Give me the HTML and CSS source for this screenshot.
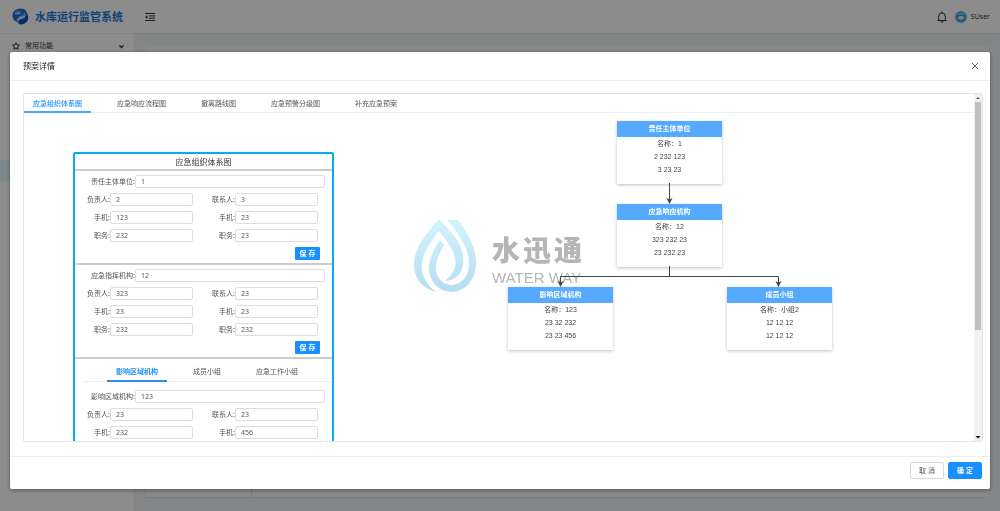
FILE: index.html
```html
<!DOCTYPE html>
<html lang="zh-CN">
<head>
<meta charset="utf-8">
<title>水库运行监管系统</title>
<link rel="stylesheet" href="styles.css">
</head>
<body>
<div class="app">
  <aside class="sidebar">
    <div class="brand">
      <svg class="brand-mark" viewBox="0 0 17 17"><path d="M.5 7.500C.5 3.500 4 .5 8.500.5c5 0 7 3 5 6-1 1.600-3 2-4.500 2.500C6 10 5 11.500 6 14.500 3 13.500.5 11 .5 7.500Z" fill="#176fe0"/><path d="M16.200 8.500c.8 4.500-3 8-7.700 8-3 0-3-3.500-1-5 2-1.200 4-1 5.500-3 1-1.300 1.200-3 .5-5 1.500 1 2.500 3 2.700 5Z" fill="#0e55c4"/><path d="M3 5.500h5M4 3.500v3M6 2.500v4M8 3v3M13 5c-1.500 4-6.500 2.500-8 7.500M7 11.500c2-1.500 4-1 6-2.500" stroke="#c8dcf2" fill="none" stroke-width="1"/></svg>
      <span class="brand-name">水库运行监管系统</span>
    </div>
    <nav class="side-menu">
      <a class="side-item" href="#">
        <svg class="icon" viewBox="0 0 16 16"><path d="m8 1.500 2 4.300 4.700.6-3.500 3.200.9 4.700L8 12l-4.100 2.300.9-4.700L1.300 6.400 6 5.800Z"/></svg>
        <span class="side-label">常用功能</span>
        <svg class="chevron" viewBox="0 0 10 10"><path d="m2 3.500 3 3 3-3"/></svg>
      </a>
      <a class="side-item side-item-active" href="#" aria-label="预案"></a>
    </nav>
  </aside>
  <div class="main">
    <header class="topbar">
      <svg class="fold" viewBox="0 0 10 10"><path d="M0 1.500h10M4 3.900h6M4 6.200h6M0 8.500h10"/><path class="fold-tip" d="M2.500 3v4L0 5Z"/></svg>
      <div class="user">
        <svg class="bell" viewBox="0 0 10 12"><path d="M.5 9.500h9M1.700 9.500V5.200a3.300 3.300 0 0 1 6.600 0v4.300M5 2V.5M3.800 10.200c.2 1.500 2.200 1.500 2.400 0"/></svg>
        <svg class="avatar" viewBox="0 0 12 12"><circle cx="6" cy="6" r="6" fill="#5eb4e8"/><circle cx="6" cy="6.200" r="4" fill="#2589c8"/><ellipse cx="6" cy="6.800" rx="3" ry="2" fill="#d8eaf5"/><path d="M3 4q3-3 6 0" stroke="#bcdcf0" fill="none"/></svg>
        <span>SUser</span>
      </div>
    </header>
    <div class="page"><div class="page-card"><div class="page-left"></div></div></div>
  </div>
</div>
<div class="mask">
<section class="modal" role="dialog" aria-labelledby="dialog-title">
  <header class="modal-head">
    <h1 class="modal-title" id="dialog-title">预案详情</h1>
    <button class="close" aria-label="关闭"><svg viewBox="0 0 8 8"><path d="m1 1 6 6M7 1 1 7"/></svg></button>
  </header>
  <div class="modal-body">
    <div class="viewer">
      <div class="content">
        <div class="tabs" role="tablist">
          <button class="tab tab-on" role="tab">应急组织体系图</button>
          <button class="tab" role="tab">应急响应流程图</button>
          <button class="tab" role="tab">撤离路线图</button>
          <button class="tab" role="tab">应急预警分级图</button>
          <button class="tab" role="tab">补充应急预案</button>
        </div>
        <div class="split">
          <form class="plan">
            <h2 class="plan-title">应急组织体系图</h2>
            <div class="group">
              <div class="field field-wide"><label for="a0">责任主体单位:</label><input id="a0" value="1"></div>
              <div class="pairs">
                <div class="field"><label for="a1">负责人:</label><input id="a1" value="2"></div>
                <div class="field"><label for="a2">联系人:</label><input id="a2" value="3"></div>
                <div class="field"><label for="a3">手机:</label><input id="a3" value="123"></div>
                <div class="field"><label for="a4">手机:</label><input id="a4" value="23"></div>
                <div class="field"><label for="a5">职务:</label><input id="a5" value="232"></div>
                <div class="field"><label for="a6">职务:</label><input id="a6" value="23"></div>
              </div>
              <button class="save" type="button">保 存</button>
            </div>
            <div class="group">
              <div class="field field-wide"><label for="b0">应急指挥机构:</label><input id="b0" value="12"></div>
              <div class="pairs">
                <div class="field"><label for="b1">负责人:</label><input id="b1" value="323"></div>
                <div class="field"><label for="b2">联系人:</label><input id="b2" value="23"></div>
                <div class="field"><label for="b3">手机:</label><input id="b3" value="23"></div>
                <div class="field"><label for="b4">手机:</label><input id="b4" value="23"></div>
                <div class="field"><label for="b5">职务:</label><input id="b5" value="232"></div>
                <div class="field"><label for="b6">职务:</label><input id="b6" value="232"></div>
              </div>
              <button class="save" type="button">保 存</button>
            </div>
            <div class="subtabs" role="tablist">
              <button class="subtab subtab-on" type="button" role="tab">影响区域机构</button>
              <button class="subtab" type="button" role="tab">成员小组</button>
              <button class="subtab" type="button" role="tab">应急工作小组</button>
            </div>
            <div class="group group-last">
              <div class="field field-wide"><label for="c0">影响区域机构:</label><input id="c0" value="123"></div>
              <div class="pairs">
                <div class="field"><label for="c1">负责人:</label><input id="c1" value="23"></div>
                <div class="field"><label for="c2">联系人:</label><input id="c2" value="23"></div>
                <div class="field"><label for="c3">手机:</label><input id="c3" value="232"></div>
                <div class="field"><label for="c4">手机:</label><input id="c4" value="456"></div>
              </div>
            </div>
          </form>
          <div class="chart">
            <svg class="links" viewBox="0 0 324 230"><path d="M161.500 62v20M161.500 145v10.500M52.500 165v-9.500h218v9.500"/><path class="tip" d="m158.500 77 3 6 3-6-3 1.500ZM49.500 160l3 6 3-6-3 1.500ZM267.500 160l3 6 3-6-3 1.500Z"/></svg>
            <div class="node node-root"><h3>责任主体单位</h3><p>名称：1</p><p>2 232 123</p><p>3 23 23</p></div>
            <div class="node node-mid"><h3>应急响应机构</h3><p>名称：12</p><p>323 232 23</p><p>23 232 23</p></div>
            <div class="node node-left"><h3>影响区域机构</h3><p>名称：123</p><p>23 32 232</p><p>23 23 456</p></div>
            <div class="node node-right"><h3>成员小组</h3><p>名称：小组2</p><p>12 12 12</p><p>12 12 12</p></div>
          </div>
        </div>
      </div>
      <div class="scrollbar" aria-hidden="true">
        <svg viewBox="0 0 8 8"><path d="m2 5 2-2 2 2Z"/></svg>
        <div class="track"><div class="thumb"></div></div>
        <svg class="down" viewBox="0 0 8 8"><path d="m1.500 3 2.500 2.500L6.500 3Z"/></svg>
      </div>
      <div class="watermark">
        <svg class="drop" viewBox="0 0 62 74"><defs><linearGradient id="g" x1="0" y1="0" x2="0" y2="1"><stop offset="0" stop-color="#d2f3fd"/><stop offset="1" stop-color="#b5def1"/></linearGradient></defs><path fill="url(#g)" d="M25 0C14 13 0 27 0 46 0 59 9 70 22 73 12 65 6 55 8 43 10 32 18 21 25 12 32 21 39 29 41 39 43 48 39 55 31 62 42 61 48 55 49 45 51 33 45 23 37 13Z"/><path fill="url(#g)" d="M33 1h11C54 14 62 29 62 44 62 61 51 73 37 73 24 72 15 62 15 49 16 38 20 29 26 21l4 5C26 34 21 42 22 51 23 60 30 66 38 66 48 65 55 57 55 45 55 29 45 15 33 1Z"/></svg>
        <div class="wm-text">
          <div class="wm-cn"><span>水</span><span>迅</span><span>通</span></div>
          <div class="wm-en">WATER WAY</div>
        </div>
      </div>
    </div>
  </div>
  <footer class="modal-foot">
    <button class="btn">取 消</button>
    <button class="btn btn-primary">确 定</button>
  </footer>
</section>
</div>
</body>
</html>
```
FILE: styles.css
```css
* { box-sizing: border-box; }
body {
  margin: 0;
  font: 7px/10px "Noto Sans", "Noto Sans CJK SC", sans-serif;
  color: #555;
}
h1, h2, h3, p { margin: 0; font-weight: 400; }
button, input { font: inherit; color: inherit; margin: 0; padding: 0; border: 0; background: none; }
svg { display: block; fill: none; stroke: currentColor; flex: none; }
a { color: inherit; text-decoration: none; }

/* Application behind the dialog */
.app { display: flex; height: 100vh; overflow: hidden; background: #f0f2f5; }
.sidebar { width: 134px; background: #fff; }
.brand { display: flex; align-items: center; gap: 6px; height: 34px; padding-left: 12px; border-bottom: 1px solid #eee; }
.brand-mark { width: 17px; height: 17px; stroke: none; }
.brand-name { font-size: 11px; font-weight: 700; color: #1a79dc; white-space: nowrap; }
.side-item { display: flex; align-items: center; height: 24px; padding: 0 9px 0 12px; color: #333; }
.side-item-active { height: 21px; margin-top: 102px; background: #e6f7ff; }
.icon { width: 8px; height: 8px; stroke-width: 2; margin-right: 5px; }
.side-label { flex: 1; }
.chevron { width: 7px; height: 7px; stroke-width: 2; }
.main { flex: 1; display: flex; flex-direction: column; }
.topbar { display: flex; align-items: center; justify-content: space-between; height: 34px; padding: 0 10px 0 11px; background: #fff; border-bottom: 1px solid #e4e6ea; color: #333; }
.fold { width: 10px; height: 10px; }
.fold-tip { fill: currentColor; stroke: none; }
.user { display: flex; align-items: center; gap: 8px; }
.bell { width: 10px; height: 12px; }
.avatar { width: 12px; height: 12px; stroke: none; }
.user span { margin-left: -4px; }
.page { flex: 1; padding: 12px 12px 13px; }
.page-card { display: flex; align-items: flex-end; height: 100%; background: #f8f9fa; border-bottom: 1px solid #dcdee2; border-radius: 1px; }
.page-left { width: 106px; height: 40px; border-right: 1px solid #dcdee2; }

/* Dialog */
.mask { position: fixed; inset: 0; padding: 52px 10px 22px; background: rgba(0, 0, 0, .45); }
.modal { display: flex; flex-direction: column; height: 100%; background: #fff; border-radius: 2px; box-shadow: 0 1px 4px rgba(0, 0, 0, .4); }
.modal-head { display: flex; align-items: center; justify-content: space-between; height: 29px; padding: 0 11px 0 13px; border-bottom: 1px solid #eee; }
.modal-title { font-size: 8px; color: #222; }
.close { width: 8px; height: 8px; color: #666; }
.modal-body { flex: 1; min-height: 0; padding: 12px 7px 14px 13px; }
.viewer { position: relative; display: flex; height: 100%; border: 1px solid #e4e4e4; border-radius: 2px; overflow: hidden; }
.content { flex: 1; overflow: hidden; }
.modal-foot { display: flex; justify-content: flex-end; gap: 4px; padding: 5px 8px 10px; border-top: 1px solid #eee; }
.btn { width: 34px; height: 17px; border: 1px solid #d9d9d9; border-radius: 2px; }
.btn-primary { border-color: #1890ff; background: #1890ff; color: #fff; font-weight: 700; }

.tabs { display: flex; gap: 17px; height: 19px; border-bottom: 1px solid #eee; }
.tab { height: 19px; padding: 2px 9px 0; border-bottom: 2px solid transparent; }
.tab-on { color: #1890ff; border-color: #4aa6f8; font-weight: 500; }
.split { display: grid; grid-template-columns: 484px 1fr; }

/* Plan form */
.plan { width: 261px; margin: 39px 0 0 49px; border: 2px solid #08aaf2; border-radius: 2px; }
.plan-title { height: 17px; border-bottom: 2px solid #ccc; font-size: 8px; line-height: 15px; text-align: center; color: #333; }
.group { display: flex; flex-direction: column; gap: 5px; padding: 4px 7px 3px; border-bottom: 2px solid #ccc; }
.group-last { padding-top: 8px; border: 0; }
.field { display: grid; grid-template-columns: 28px 83px; align-items: center; }
.field-wide { grid-template-columns: 53px 1fr; }
.field label { text-align: right; white-space: nowrap; }
.field input { width: 100%; min-width: 0; height: 13px; padding: 0 5px; border: 1px solid #ddd; border-radius: 2px; }
.pairs { display: grid; grid-template-columns: 111px 111px; column-gap: 14px; row-gap: 5px; }
.save { align-self: flex-end; width: 25px; height: 13px; margin-right: 5px; border-radius: 1px; background: #1890ff; color: #fff; font-weight: 700; }
.subtabs { display: flex; gap: 17px; height: 23px; margin-left: 8px; padding-left: 24px; border-bottom: 1px solid #eee; }
.subtab { height: 23px; padding: 4px 9px 0; border-bottom: 2px solid transparent; }
.subtab-on { color: #1890ff; border-color: #2f8fdc; font-weight: 700; }

/* Organisation diagram */
.chart { position: relative; width: 324px; height: 240px; margin-top: 8px; font-family: "Liberation Sans", "Noto Sans CJK SC", sans-serif; color: #444; }
.links { position: absolute; left: 0; top: 0; width: 324px; height: 230px; z-index: 1; color: #444; }
.links .tip { fill: currentColor; stroke: none; }
.node { position: absolute; width: 105px; height: 63px; background: #fff; box-shadow: 0 1px 3px rgba(0, 0, 0, .25); text-align: center; line-height: 13px; }
.node h3 { height: 16px; font-size: 7px; line-height: 16px; font-weight: 700; color: #fff; background: #55aaff; }
.node p { font-family: "Liberation Sans", "Noto Sans CJK TC", sans-serif; }
.node-root { left: 109px; top: 0; }
.node-mid { left: 109px; top: 83px; }
.node-left { left: 0; top: 166px; }
.node-right { left: 219px; top: 166px; }

.scrollbar { display: flex; flex-direction: column; width: 8px; background: #f1f1f1; color: #555; }
.scrollbar svg { width: 8px; height: 8px; fill: currentColor; stroke: none; }
.scrollbar .down { color: #111; }
.track { flex: 1; padding: 0 1px; }
.thumb { height: 69%; background: #c1c1c1; }

.watermark { position: absolute; left: 390px; top: 125px; display: flex; gap: 16px; pointer-events: none; color: #b5b5b5; }
.drop { width: 62px; height: 74px; stroke: none; }
.wm-text { padding-top: 14px; }
.wm-cn { display: flex; gap: 3px; font-size: 28px; line-height: 34px; font-weight: 900; }
.wm-en { font: 15px/22px "Liberation Sans", sans-serif; white-space: nowrap; }
```
